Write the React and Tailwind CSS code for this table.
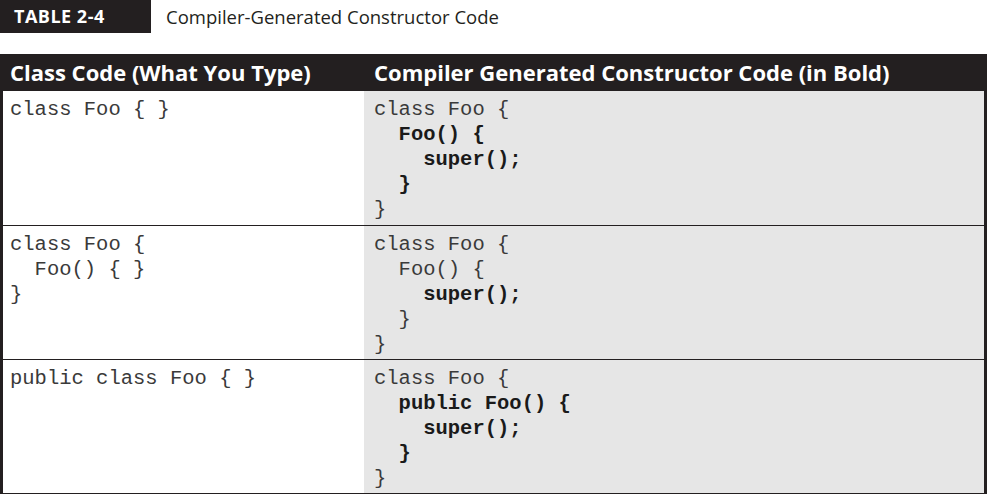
import React from 'react';

const rows = [
  {
    left: [[{ t: 'class Foo { }' }]],
    right: [
      [{ t: 'class Foo {' }],
      [{ t: '  ' }, { t: 'Foo() {', b: true }],
      [{ t: '    ' }, { t: 'super();', b: true }],
      [{ t: '  ' }, { t: '}', b: true }],
      [{ t: '}' }],
    ],
  },
  {
    left: [[{ t: 'class Foo {' }], [{ t: '  Foo() { }' }], [{ t: '}' }]],
    right: [
      [{ t: 'class Foo {' }],
      [{ t: '  Foo() {' }],
      [{ t: '    ' }, { t: 'super();', b: true }],
      [{ t: '  }' }],
      [{ t: '}' }],
    ],
  },
  {
    left: [[{ t: 'public class Foo { }' }]],
    right: [
      [{ t: 'class Foo {' }],
      [{ t: '  ' }, { t: 'public Foo() {', b: true }],
      [{ t: '    ' }, { t: 'super();', b: true }],
      [{ t: '  ' }, { t: '}', b: true }],
      [{ t: '}' }],
    ],
  },
];

const Code = ({ lines }) => (
  <pre className="font-['Liberation_Mono',monospace] text-[20.5px] leading-[25px] text-[#3a3a3a] whitespace-pre">
    {lines.map((line, i) => (
      <div key={i} className="h-[25px]">
        {line.map((seg, j) => (
          <span key={j} className={seg.b ? 'font-bold text-[#1a1a1a]' : ''}>
            {seg.t}
          </span>
        ))}
      </div>
    ))}
  </pre>
);

export default function App() {
  return (
    <div className="w-[987px] h-[494px] bg-white font-['Open_Sans',sans-serif]">
      {/* caption */}
      <div className="flex items-center h-[33px]">
        <div className="w-[151px] h-full bg-[#231f20] text-white font-bold text-[18px] pl-[14px] flex items-center tracking-[0.5px]">
          TABLE 2-4
        </div>
        <div className="pl-[15px] text-[18.5px] text-[#231f20]">Compiler-Generated Constructor Code</div>
      </div>

      <div className="mt-[21px] border-l-[3px] border-r-[3px] border-b-[2px] border-[#231f20]">
        <div className="grid grid-cols-[361px_1fr] h-[37px] bg-[#231f20] text-white font-bold text-[22px]">
          <div className="pl-[7px] flex items-center">Class Code (What You Type)</div>
          <div className="pl-[10px] flex items-center">Compiler Generated Constructor Code (in Bold)</div>
        </div>
        {rows.map((row, i) => (
          <div
            key={i}
            className={`grid grid-cols-[361px_1fr] h-[134px] ${i > 0 ? 'border-t border-[#231f20]' : ''}`}
          >
            <div className="pl-[7px] pt-[6px] bg-white">
              <Code lines={row.left} />
            </div>
            <div className="pl-[10px] pt-[6px] bg-[#e6e6e6]">
              <Code lines={row.right} />
            </div>
          </div>
        ))}
      </div>
    </div>
  );
}
